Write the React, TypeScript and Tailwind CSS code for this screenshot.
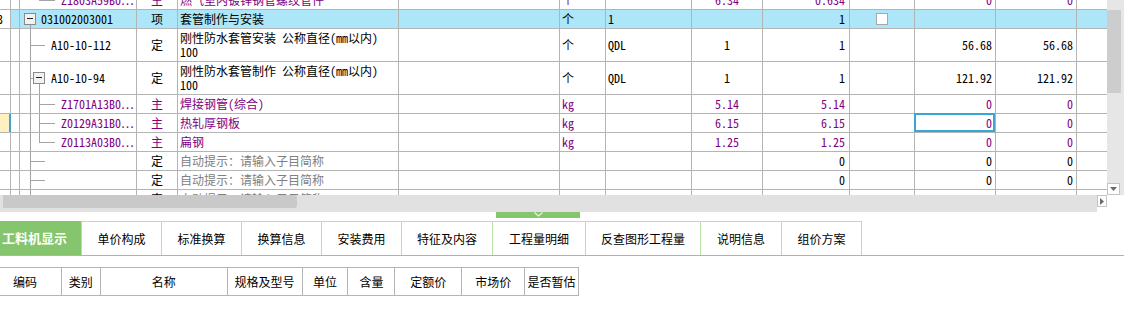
import React from "react";

const GRID_FONT = "font-['Noto_Sans_Mono_CJK_SC','Noto_Sans_CJK_SC','DejaVu_Sans_Mono',monospace]";
const UI_FONT = "font-['Noto_Sans_CJK_SC','Noto_Sans',sans-serif]";

type TreeKind = "l2top" | "root" | "l1" | "l1box" | "l2" | "l2last";
type Tone = "black" | "purple" | "hint";

type Row = {
  h: 19 | 33;
  tree: TreeKind;
  num?: string;
  code?: string;
  type: string;
  name: string[];
  tone: Tone;
  unit?: string;
  c7?: string;
  c8?: string;
  c9?: string;
  check?: boolean;
  c11?: string;
  c12?: string;
  hl?: boolean;
  mark?: boolean;
  sel?: boolean;
};

const HINT = "自动提示：请输入子目简称";

const rows: Row[] = [
  { h: 19, tree: "l2top", code: "Z1803A59B0…", type: "主", name: ["燃气室内镀锌钢管螺纹管件"], tone: "purple", unit: "个", c8: "6.34", c9: "0.634", c11: "0", c12: "0" },
  { h: 19, tree: "root", num: "3", code: "031002003001", type: "项", name: ["套管制作与安装"], tone: "black", unit: "个", c7: "1", c9: "1", check: true, hl: true },
  { h: 33, tree: "l1", code: "A10-10-112", type: "定", name: ["刚性防水套管安装 公称直径(mm以内)", "100"], tone: "black", unit: "个", c7: "QDL", c8: "1", c9: "1", c11: "56.68", c12: "56.68" },
  { h: 33, tree: "l1box", code: "A10-10-94", type: "定", name: ["刚性防水套管制作 公称直径(mm以内)", "100"], tone: "black", unit: "个", c7: "QDL", c8: "1", c9: "1", c11: "121.92", c12: "121.92" },
  { h: 19, tree: "l2", code: "Z1701A13B0…", type: "主", name: ["焊接钢管(综合)"], tone: "purple", unit: "kg", c8: "5.14", c9: "5.14", c11: "0", c12: "0" },
  { h: 19, tree: "l2", code: "Z0129A31B0…", type: "主", name: ["热轧厚钢板"], tone: "purple", unit: "kg", c8: "6.15", c9: "6.15", c11: "0", c12: "0", mark: true, sel: true },
  { h: 19, tree: "l2last", code: "Z0113A03B0…", type: "主", name: ["扁钢"], tone: "purple", unit: "kg", c8: "1.25", c9: "1.25", c11: "0", c12: "0" },
  { h: 19, tree: "l1", type: "定", name: [HINT], tone: "hint", c9: "0", c11: "0", c12: "0" },
  { h: 19, tree: "l1", type: "定", name: [HINT], tone: "hint", c9: "0", c11: "0", c12: "0" },
  { h: 19, tree: "l1", type: "定", name: [HINT], tone: "hint", c9: "0", c11: "0", c12: "0" },
];

const TONE: Record<Tone, string> = {
  black: "text-black",
  purple: "text-[#800080]",
  hint: "text-[#808080]",
};

const TABS: [string, string][] = [
  ["工料机显示", "w-[82px]"],
  ["单价构成", "w-[80px]"],
  ["标准换算", "w-[80px]"],
  ["换算信息", "w-[80px]"],
  ["安装费用", "w-[80px]"],
  ["特征及内容", "w-[91px]"],
  ["工程量明细", "w-[93px]"],
  ["反查图形工程量", "w-[115px]"],
  ["说明信息", "w-[81px]"],
  ["组价方案", "w-[80px]"],
];

const HEADERS: [string, string][] = [
  ["编码", "w-[62px] justify-start pl-[13px]"],
  ["类别", "w-[39px] justify-center"],
  ["名称", "w-[127px] justify-center"],
  ["规格及型号", "w-[75px] justify-center"],
  ["单位", "w-[46px] justify-center"],
  ["含量", "w-[47px] justify-center"],
  ["定额价", "w-[67px] justify-center"],
  ["市场价", "w-[63px] justify-center"],
  ["是否暂估", "w-[54px] justify-center"],
];

function ExpandBox({ x, y }: { x: number; y: number }) {
  return (
    <g>
      <rect x={x + 0.5} y={y + 0.5} width={11} height={11} fill="#f2f2f2" stroke="#8a8a8a" />
      <rect x={x + 3} y={y + 5} width={6} height={1} fill="#222" />
    </g>
  );
}

function Tree({ kind, h }: { kind: TreeKind; h: number }) {
  const H = h - 1;
  const c = Math.floor(H / 2);
  const bt = Math.round((H - 12) / 2);
  const w = kind === "root" ? 21 : kind === "l1" || kind === "l1box" ? 31 : 41;
  const stroke = "#a3a3a3";
  return (
    <svg width={w} height={H} className="shrink-0" shapeRendering="crispEdges">
      {kind === "root" && (
        <>
          <ExpandBox x={4} y={bt} />
          <rect x={10} y={bt + 12} width={1} height={H - bt - 12} fill={stroke} />
        </>
      )}
      {kind !== "root" && kind !== "l2top" && <rect x={10} y={0} width={1} height={H} fill={stroke} />}
      {kind === "l1" && <rect x={10} y={c} width={15} height={1} fill={stroke} />}
      {kind === "l1box" && (
        <>
          <rect x={10} y={bt + 6} width={3} height={1} fill={stroke} />
          <ExpandBox x={13} y={bt} />
          <rect x={19} y={bt + 12} width={1} height={H - bt - 12} fill={stroke} />
        </>
      )}
      {kind === "l2" && <rect x={19} y={0} width={1} height={H} fill={stroke} />}
      {(kind === "l2last" || kind === "l2top") && <rect x={19} y={0} width={1} height={c + 1} fill={stroke} />}
      {(kind === "l2" || kind === "l2last" || kind === "l2top") && <rect x={19} y={c} width={16} height={1} fill={stroke} />}
    </svg>
  );
}

function Cell({
  w,
  className = "",
  clip = true,
  last = false,
  children,
}: {
  w: string;
  className?: string;
  clip?: boolean;
  last?: boolean;
  children?: React.ReactNode;
}) {
  return (
    <div
      className={`shrink-0 ${w} h-full border-b ${last ? "" : "border-r"} border-[#b4b4b4] ${
        clip ? "overflow-hidden" : "relative"
      } whitespace-nowrap flex items-center ${className}`}
    >
      {children}
    </div>
  );
}

function GridRow({ r }: { r: Row }) {
  const tone = TONE[r.tone];
  const numTone = r.tone === "hint" ? "text-black" : tone;
  const typeTone = r.tone === "hint" ? "text-black" : tone;
  const bg = r.hl ? "bg-[#ade6f8]" : "bg-white";
  return (
    <div className={`flex ${r.h === 33 ? "h-[33px]" : "h-[19px]"} ${bg}`}>
      {r.mark ? (
        <div className="shrink-0 w-[11px] h-full border-b border-[#b4b4b4] bg-[#fff1bf] flex justify-end">
          <div className="w-[2px] h-full bg-[#3aa6d6]" />
        </div>
      ) : (
        <Cell w="w-[11px]" className="bg-white">
          {r.num && <span className="-ml-[3px] text-black">{r.num}</span>}
        </Cell>
      )}
      <Cell w="w-[9px]" />
      <Cell w="w-[117px]" className={r.tone === "purple" ? tone : "text-black"}>
        <Tree kind={r.tree} h={r.h} />
        {r.code && <span>{r.code}</span>}
      </Cell>
      <Cell w="w-[41px]" className={`justify-center ${typeTone}`}>
        {r.type}
      </Cell>
      <Cell
        w="w-[221px]"
        className={`pl-[2px] ${tone} ${r.name.length > 1 ? "flex-col !items-start justify-start pt-[2px]" : ""}`}
      >
        {r.name.map((n, i) => (
          <span key={i} className="leading-[14px]">
            {n}
          </span>
        ))}
      </Cell>
      <Cell w="w-[161px]" />
      <Cell w="w-[46px]" className={`pl-[2px] ${tone}`}>
        {r.unit}
      </Cell>
      <Cell w="w-[86px]" className={`pl-[2px] ${tone}`}>
        {r.c7}
      </Cell>
      <Cell w="w-[71px]" className={`justify-center ${numTone}`}>
        {r.c8}
      </Cell>
      <Cell w="w-[87px]" className={`justify-end pr-[4px] ${numTone}`}>
        {r.c9}
      </Cell>
      <Cell w="w-[65px]" className="justify-center">
        {r.check && <div className="w-[12px] h-[12px] bg-white border border-[#a8a8a8]" />}
      </Cell>
      <Cell w="w-[81px]" clip={!r.sel} className={`justify-end pr-[3px] ${numTone}`}>
        {r.c11}
        {r.sel && <div className="absolute -left-px -top-px right-0 bottom-0 border-2 border-[#3aa6d6]" />}
      </Cell>
      <Cell w="w-[81px]" className={`justify-end pr-[3px] ${numTone}`}>
        {r.c12}
      </Cell>
      <Cell w="w-[30px]" last />
    </div>
  );
}

export default function App() {
  return (
    <div className="w-[1124px] h-[328px] bg-white overflow-hidden">
      {/* main grid */}
      <div className="flex h-[195px]">
        <div className={`w-[1107px] overflow-hidden text-[12px] ${GRID_FONT}`}>
          <div className="-mt-[9px]">
            {rows.map((r, i) => (
              <GridRow key={i} r={r} />
            ))}
          </div>
        </div>
        <div className="w-[17px] h-full bg-[#e6e6e6] flex flex-col">
          <div className="h-[10px]" />
          <div className="w-[14px] h-[83px] bg-[#cdcdcd]" />
          <div className="flex-1" />
          <div className="w-[13px] h-[12px] bg-white border border-[#c4c4c4] flex items-center justify-center">
            <svg width="7" height="4">
              <path d="M0 0 L7 0 L3.5 4 Z" fill="#6a6a6a" />
            </svg>
          </div>
        </div>
      </div>

      {/* horizontal scrollbar */}
      <div className="flex h-[17px]">
        <div className="w-[1097px] h-full bg-[#e1e1e1] pl-[3px]">
          <div className="w-[294px] h-[13px] bg-[#c9c9c9] rounded-r-[3px]" />
        </div>
        <div className="w-[10px] h-[12px] bg-white border border-[#c4c4c4] flex items-center justify-center">
          <svg width="4" height="7">
            <path d="M0 0 L4 3.5 L0 7 Z" fill="#6a6a6a" />
          </svg>
        </div>
        <div className="flex-1 bg-white" />
      </div>

      {/* splitter */}
      <div className="h-[6px] pl-[496px]">
        <div className="w-[84px] h-full bg-[#84c56d] flex justify-center">
          <svg width="9" height="6">
            <path d="M0.5 0.5 L4.5 4 L8.5 0.5" fill="none" stroke="#e8f5e2" strokeWidth="1.2" />
          </svg>
        </div>
      </div>

      {/* tabs */}
      <div className={`mt-[3px] flex h-[35px] border-b border-[#8ccf78] text-[12px] ${UI_FONT}`}>
        {TABS.map(([label, w], i) =>
          i === 0 ? (
            <div
              key={label}
              className={`${w} h-full bg-[#84c56d] border-r border-[#b5e3a6] flex items-center pl-[2px] text-white font-bold text-[13px]`}
            >
              {label}
            </div>
          ) : (
            <div
              key={label}
              className={`${w} h-full border-t border-r border-[#b5e3a6] flex items-center justify-center text-black`}
            >
              {label}
            </div>
          )
        )}
      </div>

      {/* resource header */}
      <div className={`mt-[11px] flex h-[29px] w-[579px] border-t border-b border-[#b4b4b4] text-[12px] text-black ${UI_FONT}`}>
        {HEADERS.map(([label, cls]) => (
          <div key={label} className={`${cls} h-full border-r border-[#b4b4b4] flex items-center`}>
            {label}
          </div>
        ))}
      </div>
    </div>
  );
}
